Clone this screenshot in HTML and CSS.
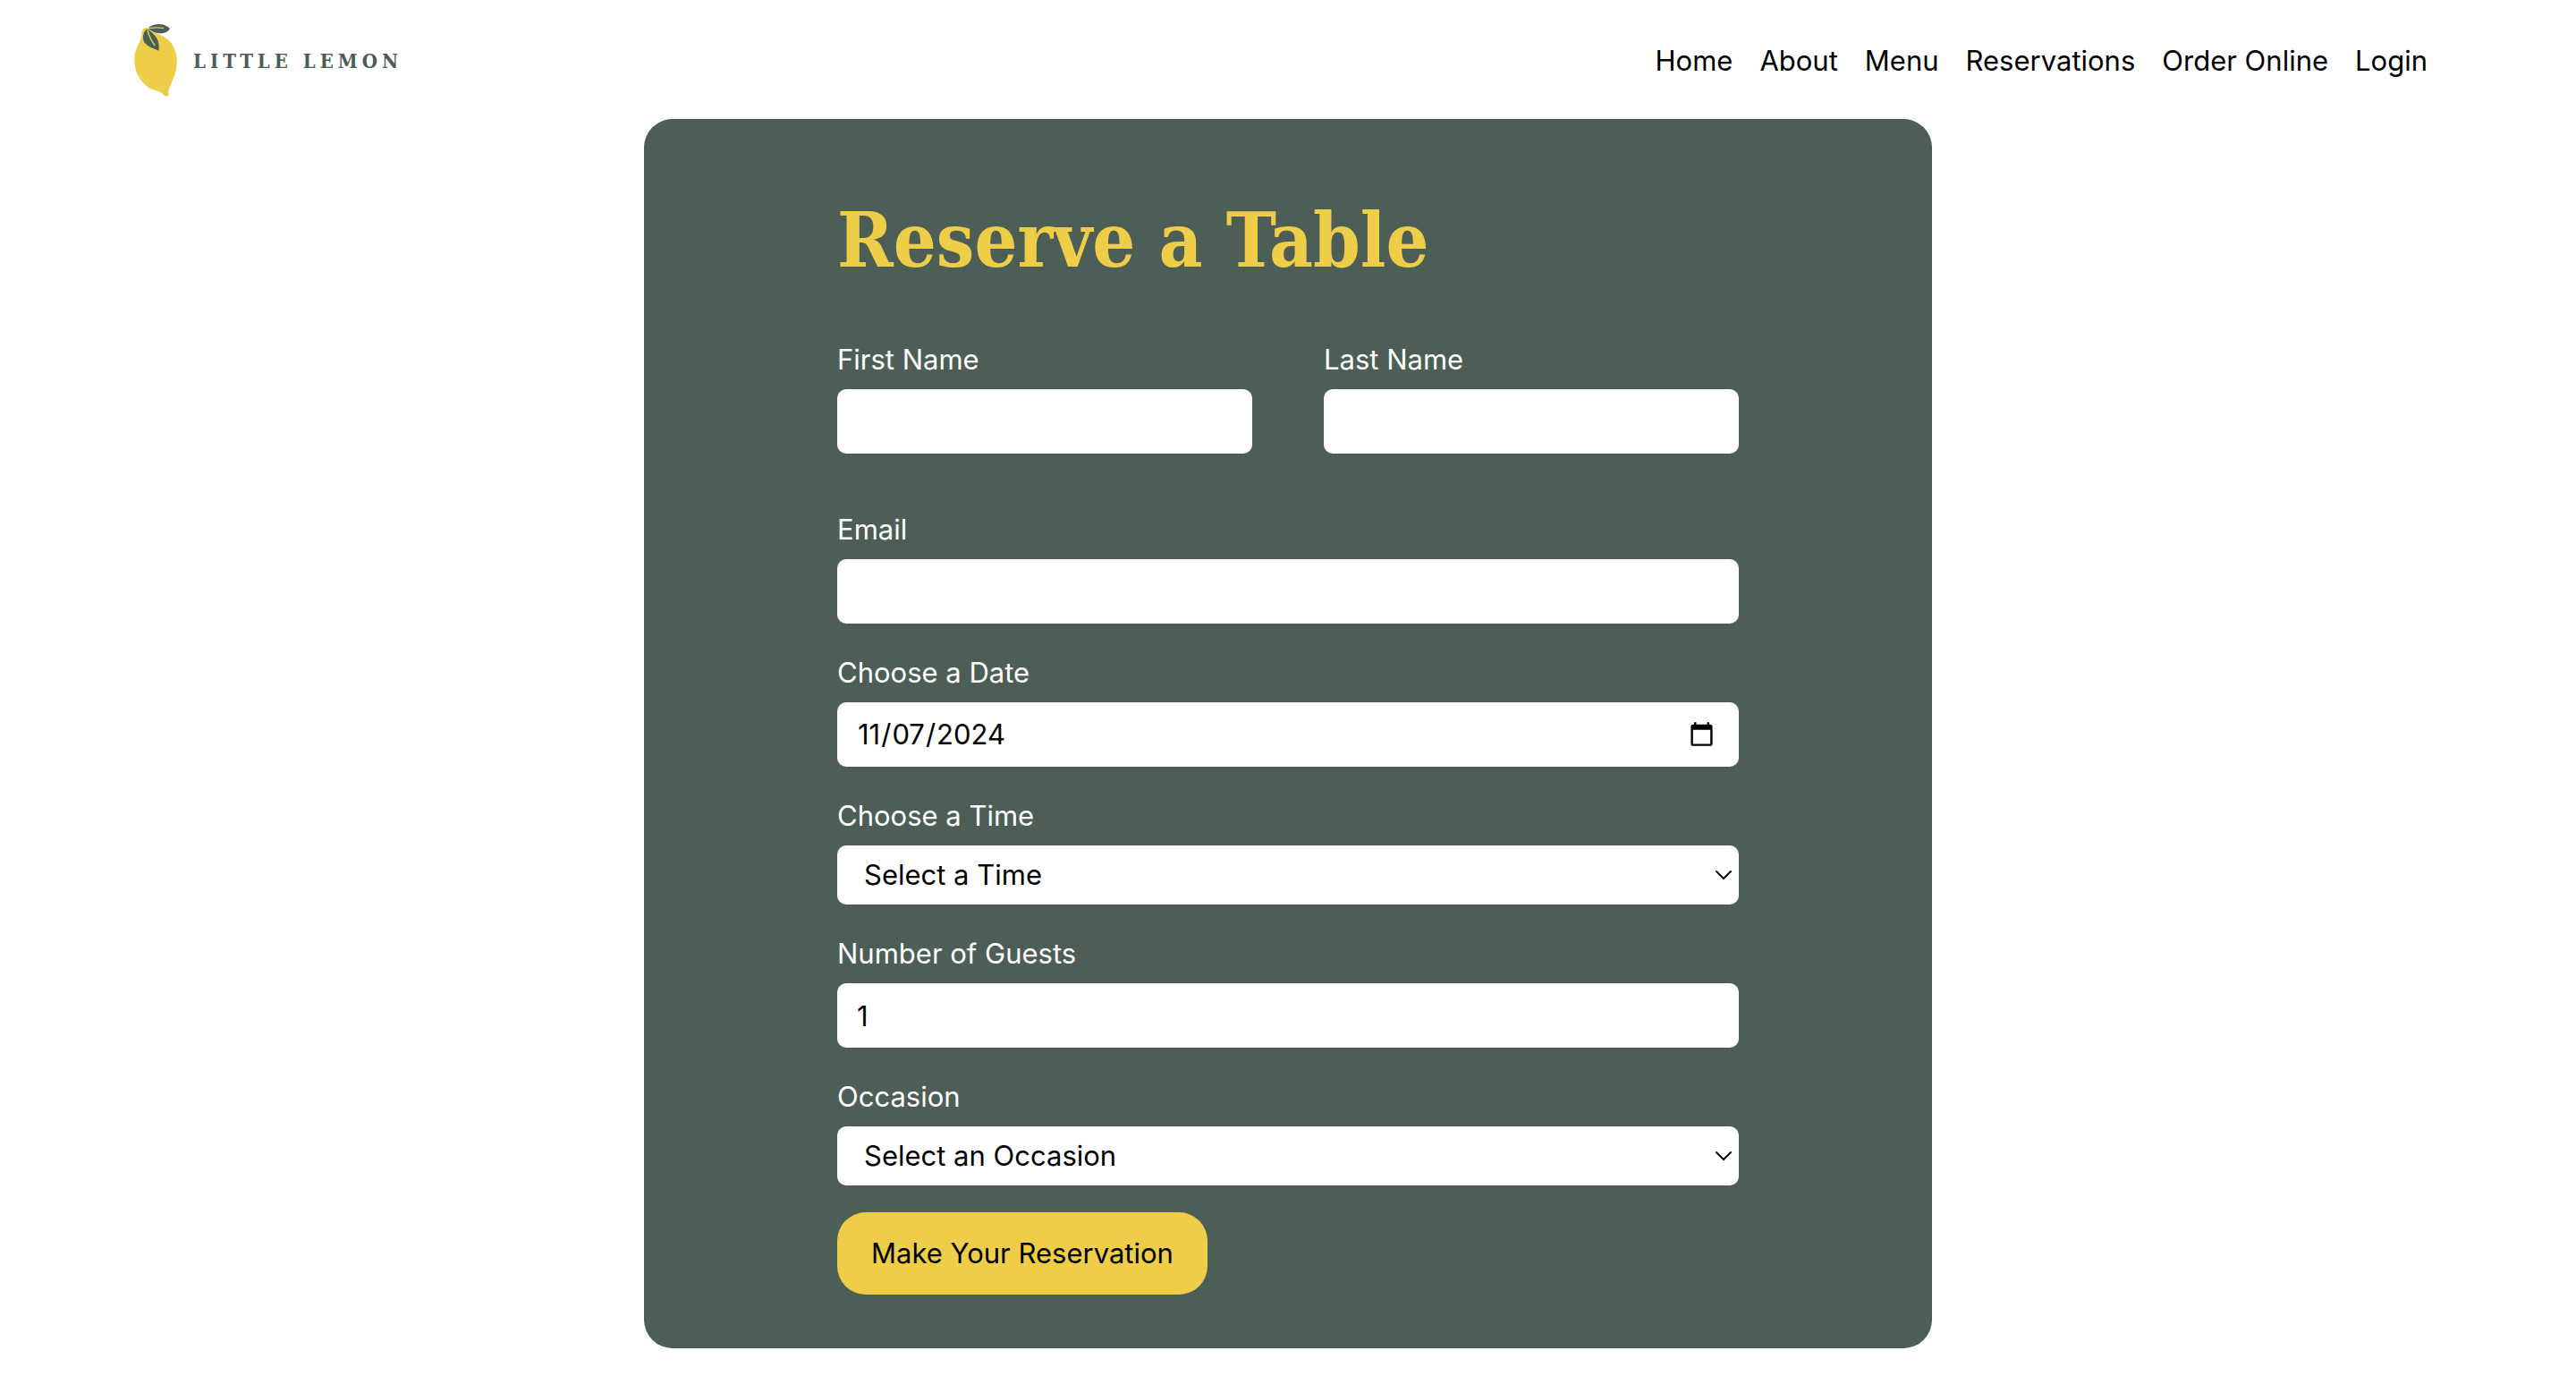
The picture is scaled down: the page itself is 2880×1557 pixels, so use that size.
FILE: index.html
```html
<!DOCTYPE html>
<html lang="en-US">
<head>
  <meta charset="utf-8">
  <meta name="viewport" content="width=device-width, initial-scale=1">
  <title>Little Lemon</title>
  <link rel="stylesheet" href="styles.css">
</head>
<body>
  <header class="site-header">
    <a class="brand" href="#">
      <svg class="brand-mark" viewBox="60 50 144 243" aria-hidden="true">
        <path fill="#eece48" d="M88 69C92 62 104 60 111 67C120 76 131 79 143 84C162 92 181 105 191 124C199 139 205 160 203 184C202 208 193 230 185 248C178 263 175 272 175 281C176 289 174 292 168 292C162 292 159 286 152 281C140 273 127 272 114 266C97 256 79 235 69 214C62 197 59 171 62 150C66 133 76 115 82 100C86 88 84 77 88 69Z"/>
        <path fill="#495e57" d="M108 62C117 54 129 50 143 50C159 50 172 56 180 65C174 76 160 82 144 81C130 80 119 74 108 66Z"/>
        <path fill="#495e57" d="M102 67C92 74 88 89 91 104C96 122 117 128 142 139C145 125 143 108 134 94C127 83 116 75 107 67Z"/>
        <path fill="none" stroke="#eece48" stroke-width="4" stroke-linecap="round" d="M108 64Q134 60 158 63M105 71Q112 99 129 121"/>
      </svg>
      <span class="brand-name">LITTLE LEMON</span>
    </a>
    <nav class="site-nav">
      <a href="#">Home</a>
      <a href="#">About</a>
      <a href="#">Menu</a>
      <a href="#">Reservations</a>
      <a href="#">Order Online</a>
      <a href="#">Login</a>
    </nav>
  </header>

  <main class="reservation">
    <h1 class="title">Reserve a Table</h1>
    <form class="form">
      <div class="name-row">
        <div class="field">
          <label for="first-name">First Name</label>
          <input class="control" id="first-name" type="text">
        </div>
        <div class="field">
          <label for="last-name">Last Name</label>
          <input class="control" id="last-name" type="text">
        </div>
      </div>
      <div class="field">
        <label for="email">Email</label>
        <input class="control" id="email" type="email">
      </div>
      <div class="field">
        <label for="date">Choose a Date</label>
        <input class="control" id="date" type="date" value="2024-11-07">
      </div>
      <div class="field">
        <label for="time">Choose a Time</label>
        <div class="select-wrap">
          <select class="control select" id="time">
            <option>Select a Time</option>
          </select>
          <svg class="chevron" viewBox="0 0 18 12" aria-hidden="true"><path d="M1 2L9 10L17 2"/></svg>
        </div>
      </div>
      <div class="field">
        <label for="guests">Number of Guests</label>
        <input class="control" id="guests" type="number" min="1" value="1">
      </div>
      <div class="field">
        <label for="occasion">Occasion</label>
        <div class="select-wrap">
          <select class="control select" id="occasion">
            <option>Select an Occasion</option>
          </select>
          <svg class="chevron" viewBox="0 0 18 12" aria-hidden="true"><path d="M1 2L9 10L17 2"/></svg>
        </div>
      </div>
      <button class="submit" type="submit">Make Your Reservation</button>
    </form>
  </main>
</body>
</html>
```
FILE: styles.css
```css
* {
  box-sizing: border-box;
}

body {
  margin: 0;
  background: #fff;
  color: #000;
  font-family: Inter, "Liberation Sans", sans-serif;
  font-size: 31px;
  line-height: 38px;
}

.site-header {
  display: flex;
  align-items: center;
  justify-content: space-between;
  padding: 27px 166px 25px 150px;
}

.brand {
  display: flex;
  align-items: center;
  gap: 18px;
  color: #495e57;
  text-decoration: none;
}

.brand-mark {
  width: 48px;
  height: 81px;
}

.brand-name {
  font-family: "DejaVu Serif Condensed", "DejaVu Serif", serif;
  font-size: 22px;
  font-weight: 700;
  letter-spacing: 5px;
}

.site-nav {
  display: flex;
  gap: 30px;
}

.site-nav a {
  color: inherit;
  text-decoration: none;
}

.reservation {
  width: 50%;
  margin: 0 auto;
  padding: 80px 7.5% 60px;
  border-radius: 32px;
  background: #4d5e57;
}

.title {
  margin: 0 0 58px;
  color: #eece48;
  font-family: "DejaVu Serif Condensed", "DejaVu Serif", serif;
  font-size: 84px;
  font-weight: 700;
  line-height: 112px;
}

.form {
  display: flex;
  flex-direction: column;
  gap: 36px;
}

.name-row {
  display: grid;
  grid-template-columns: 1fr 1fr;
  gap: 80px;
  margin-bottom: 30px;
}

.field {
  display: flex;
  flex-direction: column;
  gap: 14px;
  color: #fff;
}

.control {
  width: 100%;
  min-width: 0;
  height: 72px;
  margin: 0;
  padding: 0 24px 0 22px;
  border: 0;
  border-radius: 10px;
  background: #fff;
  color: #000;
  font: inherit;
}

.select-wrap {
  display: grid;
  align-items: center;
}

.select-wrap > * {
  grid-area: 1 / 1;
}

.select {
  height: 66px;
  padding: 0 30px;
  appearance: none;
}

.chevron {
  justify-self: end;
  width: 18px;
  height: 12px;
  margin-right: 8px;
  fill: none;
  stroke: #000;
  stroke-width: 2;
  stroke-linecap: round;
  pointer-events: none;
}

.submit {
  align-self: flex-start;
  height: 92px;
  margin-top: -6px;
  padding: 0 38px;
  border: 0;
  border-radius: 32px;
  background: #eece48;
  color: #000;
  font: inherit;
}
```
